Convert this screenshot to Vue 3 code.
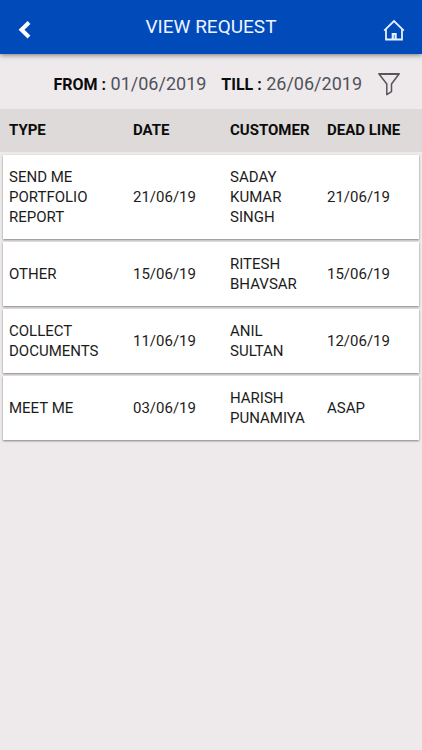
<script setup>
import { ref } from 'vue'

const from = ref('01/06/2019')
const till = ref('26/06/2019')

const columns = ['TYPE', 'DATE', 'CUSTOMER', 'DEAD LINE']

const requests = ref([
  { id: 1, type: 'SEND ME PORTFOLIO REPORT', date: '21/06/19', customer: 'SADAY KUMAR SINGH', deadline: '21/06/19' },
  { id: 2, type: 'OTHER', date: '15/06/19', customer: 'RITESH BHAVSAR', deadline: '15/06/19' },
  { id: 3, type: 'COLLECT DOCUMENTS', date: '11/06/19', customer: 'ANIL SULTAN', deadline: '12/06/19' },
  { id: 4, type: 'MEET ME', date: '03/06/19', customer: 'HARISH PUNAMIYA', deadline: 'ASAP' }
])
</script>

<template>
  <div class="page">
    <header class="toolbar">
      <button type="button" class="icon-button" aria-label="Back">
        <svg width="22" height="20" viewBox="0 0 22 20">
          <path d="M12 2.5 4.5 9.7l7.5 7.3" fill="none" stroke="#fff" stroke-width="4" />
        </svg>
      </button>
      <h1>VIEW REQUEST</h1>
      <a href="#" class="icon-button" aria-label="Home">
        <svg width="22" height="22" viewBox="0 0 22 22" fill="none" stroke="#e6f0ff" stroke-width="1.8">
          <path d="M1.2 11.6 11 2l9.8 9.6" />
          <path d="M3 10.3v10.2h16V10.3" />
          <path d="M9.8 20v-5h2.8v5" stroke-width="2.2" />
        </svg>
      </a>
    </header>

    <div class="period">
      <p><b>FROM :</b> {{ from }}</p>
      <p><b>TILL :</b> {{ till }}</p>
      <button type="button" class="icon-button" aria-label="Filter">
        <svg width="24" height="24" viewBox="0 0 24 24" fill="none" stroke="#55555b" stroke-width="1.5">
          <path d="M1.8 1.8h20.4L14.5 12v7.6L9.8 22.6V12Z" stroke-linejoin="round" />
          <path d="M2 2.2h20" />
        </svg>
      </button>
    </div>

    <table>
      <thead>
        <tr>
          <th v-for="column in columns" :key="column" scope="col">{{ column }}</th>
        </tr>
      </thead>
      <tbody>
        <tr v-for="request in requests" :key="request.id">
          <td>{{ request.type }}</td>
          <td>{{ request.date }}</td>
          <td>{{ request.customer }}</td>
          <td>{{ request.deadline }}</td>
        </tr>
      </tbody>
    </table>
  </div>
</template>

<style>
body {
  margin: 0;
  background-color: #eeeaeb;
}
</style>

<style scoped>
.page {
  min-height: 100vh;
  font-family: Roboto, 'Liberation Sans', sans-serif;
  color: #1c1c1c;
}

.toolbar {
  display: flex;
  align-items: center;
  justify-content: space-between;
  height: 54px;
  padding: 0 17px;
  box-sizing: border-box;
  background-color: #004bb9;
  box-shadow: 0 1px 5px rgba(0, 0, 0, 0.5);
}

.toolbar .icon-button {
  padding-top: 6px;
}

.toolbar h1 {
  margin: 0;
  padding-bottom: 2px;
  font-size: 19px;
  font-weight: 400;
  color: #eef4ff;
}

.icon-button {
  display: flex;
  padding: 0;
  border: 0;
  background: none;
  cursor: pointer;
}

.period {
  display: flex;
  align-items: center;
  justify-content: flex-end;
  gap: 15px;
  height: 55px;
  padding: 4px 21px 0 0;
  box-sizing: border-box;
}

.period p {
  margin: 0;
  font-size: 18px;
  color: #50525c;
}

.period b {
  font-size: 16px;
  color: #0c0c0c;
}

table,
thead,
tbody {
  display: block;
}

tr {
  display: grid;
  grid-template-columns: 124fr 97fr 97fr 86fr;
  align-items: center;
}

th,
td {
  min-width: 0;
  padding: 0 12px 0 0;
  font-size: 15px;
  line-height: 20px;
  text-align: left;
}

thead tr {
  padding: 11px 9px 12px;
  background-color: #dedad9;
}

th {
  padding-right: 0;
  color: #0c0c0c;
  white-space: nowrap;
}

tbody tr {
  margin: 3px 3px 0;
  padding: 12px 6px;
  background-color: #fff;
  box-shadow: 0 1px 2px rgba(0, 0, 0, 0.45);
}
</style>
